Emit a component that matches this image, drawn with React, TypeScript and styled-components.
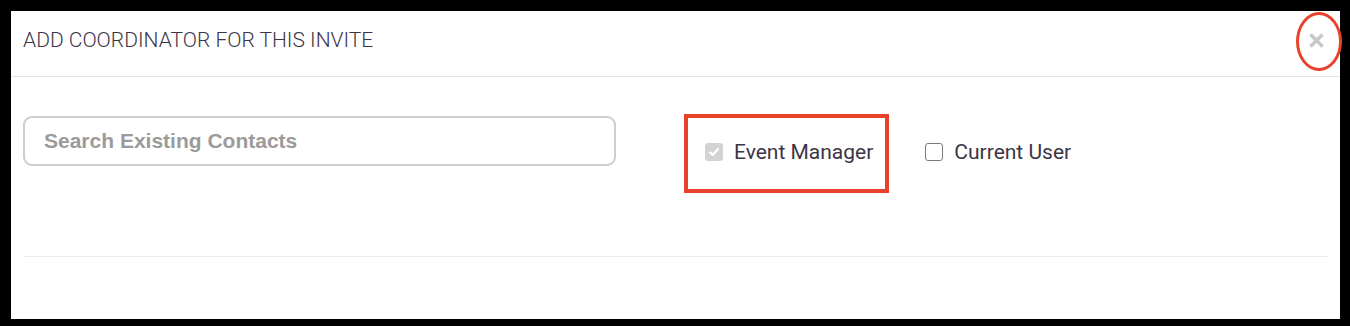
import React from 'react';
import styled, { createGlobalStyle } from 'styled-components';

const GlobalStyle = createGlobalStyle`
  html, body {
    margin: 0;
    padding: 0;
    background: #000;
  }
  body {
    padding: 11px 10px 7px 11px;
  }
`;

const Modal = styled.div`
  position: relative;
  width: 1329px;
  height: 308px;
  background: #fff;
  display: flex;
  flex-direction: column;
  font-family: Roboto, "Liberation Sans", sans-serif;
`;

const Header = styled.div`
  height: 66px;
  box-sizing: border-box;
  border-bottom: 1px solid #e6e6e6;
  display: flex;
  align-items: flex-start;
  justify-content: space-between;
  padding: 17px 15px 0 12px;
`;

const Title = styled.h4`
  margin: 0;
  font-size: 21px;
  font-weight: 300;
  line-height: 24px;
  color: #3c3446;
`;

const CloseButton = styled.button`
  border: none;
  background: none;
  padding: 0;
  margin-top: 4px;
  width: 17px;
  height: 17px;
  display: flex;
  cursor: pointer;
`;

const Ring = styled.div`
  position: absolute;
  left: 1285px;
  top: 1px;
  width: 46px;
  height: 59px;
  box-sizing: border-box;
  border: 3px solid #e8432a;
  border-radius: 50%;
  pointer-events: none;
`;

const Body = styled.div`
  padding-top: 37px;
  height: 180px;
  box-sizing: border-box;
  border-bottom: 1px solid #ececec;
  margin: 0 13px 0 12px;
  display: flex;
  align-items: flex-start;
`;

const SearchInput = styled.input`
  width: 593px;
  height: 50px;
  box-sizing: border-box;
  margin-top: 2px;
  border: 2px solid #cdcdcd;
  border-radius: 9px;
  padding: 0 0 0 19px;
  font-family: "Liberation Sans", Arial, sans-serif;
  font-size: 21px;
  font-weight: 700;
  color: #555;
  outline: none;
  &::placeholder {
    color: #9b9b9b;
  }
`;

const Options = styled.div`
  display: flex;
  margin-left: 68px;
  gap: 32px;
`;

const OptionFrame = styled.div<{ $highlight?: boolean }>`
  border: 4px solid ${p => (p.$highlight ? '#e8432a' : 'transparent')};
  padding: ${p => (p.$highlight ? '0 12px 4px 17px' : '0 0 4px 0')};
  height: 79px;
  box-sizing: border-box;
  display: flex;
  align-items: center;
`;

const Option = styled.label`
  display: flex;
  align-items: center;
  gap: 11px;
  font-size: 21px;
  color: #3c3446;
  line-height: 24px;
  cursor: pointer;
`;

const Box = styled.span<{ $checked?: boolean }>`
  width: 18px;
  height: 18px;
  box-sizing: border-box;
  border-radius: 3px;
  border: ${p => (p.$checked ? 'none' : '1.5px solid #7a7a7a')};
  background: ${p => (p.$checked ? '#d3d3d3' : '#fff')};
  display: flex;
  align-items: center;
  justify-content: center;
`;

const Check = () => (
  <svg width="12" height="12" viewBox="0 0 12 12">
    <path d="M2 6.4 L4.8 9 L10 3" fill="none" stroke="#fff" strokeWidth="2.2" strokeLinecap="round" strokeLinejoin="round" />
  </svg>
);

const CrossIcon = () => (
  <svg width="17" height="17" viewBox="0 0 17 17">
    <path d="M2.5 2.5 L14.5 14.5 M14.5 2.5 L2.5 14.5" stroke="#c8c8c8" strokeWidth="3.6" strokeLinecap="butt" />
  </svg>
);

const App = () => {
  return (
    <>
      <GlobalStyle />
      <Modal>
        <Header>
          <Title>ADD COORDINATOR FOR THIS INVITE</Title>
          <CloseButton aria-label="Close">
            <CrossIcon />
          </CloseButton>
        </Header>
        <Ring />
        <Body>
          <SearchInput placeholder="Search Existing Contacts" />
          <Options>
            <OptionFrame $highlight>
              <Option>
                <Box $checked>
                  <Check />
                </Box>
                Event Manager
              </Option>
            </OptionFrame>
            <OptionFrame>
              <Option>
                <Box />
                Current User
              </Option>
            </OptionFrame>
          </Options>
        </Body>
      </Modal>
    </>
  );
};

export default App;
